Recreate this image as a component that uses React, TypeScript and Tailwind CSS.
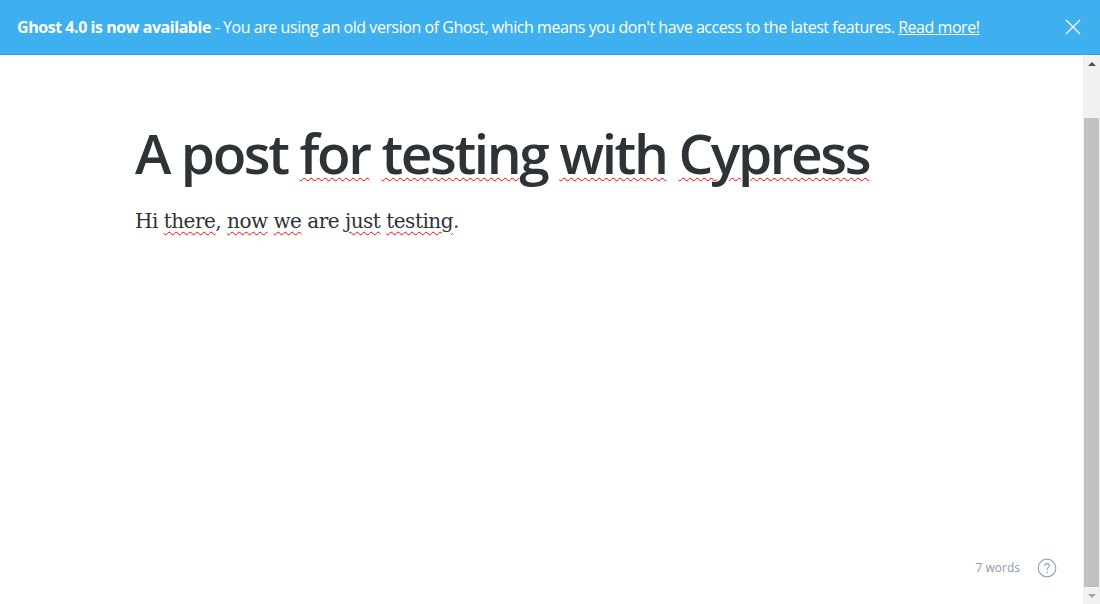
import React from "react";

const W = ({ children }: { children: React.ReactNode }) => (
  <span className="underline decoration-wavy decoration-[#ff0000] decoration-1 underline-offset-[3px]">{children}</span>
);

export default function App() {
  return (
    <div className="w-[1100px] h-[604px] overflow-hidden bg-white flex flex-col">
      <div
        className="h-[55px] shrink-0 bg-[#3eb0ef] border-b border-[#2a9fe0] flex items-center pl-[17px] pr-[19px] text-white text-[16px]"
        style={{ fontFamily: '"Open Sans", "Noto Sans", sans-serif' }}
      >
        <div className="flex-1 whitespace-nowrap tracking-[-0.45px]">
          <span className="font-bold">Ghost 4.0 is now available</span> - You are using an old version of Ghost, which means you don't have access to the latest features.{" "}
          <span className="underline">Read more!</span>
        </div>
        <svg width="16" height="16" viewBox="0 0 16 16" className="shrink-0">
          <path d="M1 1 L15 15 M15 1 L1 15" stroke="white" strokeWidth="1.3" fill="none" />
        </svg>
      </div>
      <div className="flex flex-1 min-h-0">
        <div className="flex-1 relative">
          <div className="pl-[135px] pt-[66px]">
            <h1
              className="text-[55px] leading-[64px] text-[#2e3338] font-semibold"
              style={{ fontFamily: '"Open Sans", "Noto Sans", sans-serif', letterSpacing: "-2.4px" }}
            >
              A post <W>for</W> <W>testing</W> <W>with</W> <W>Cypress</W>
            </h1>
            <p
              className="mt-[20px] text-[20px] leading-[32px] text-[#2e3338]"
              style={{ fontFamily: '"DejaVu Serif", Georgia, serif', letterSpacing: "-0.5px" }}
            >
              Hi <W>there</W>, <W>now</W> <W>we</W> are <W>just</W> <W>testing</W>.
            </p>
          </div>
          <div
            className="absolute right-[26px] bottom-[26px] flex items-center gap-[17px] text-[12px] text-[#8a9aab]"
            style={{ fontFamily: '"Open Sans", "Noto Sans", sans-serif' }}
          >
            <span>7 words</span>
            <svg width="20" height="20" viewBox="0 0 20 20">
              <circle cx="10" cy="10" r="8.8" fill="none" stroke="#98a6b5" strokeWidth="1.2" />
              <path d="M7.6 7.8 C7.6 6.4 8.7 5.6 10 5.6 C11.4 5.6 12.4 6.5 12.4 7.7 C12.4 9.3 10.2 9.5 10.2 11.3 V12" fill="none" stroke="#98a6b5" strokeWidth="1.2" />
              <circle cx="10.2" cy="14.2" r="0.8" fill="#98a6b5" />
            </svg>
          </div>
        </div>
        <div className="w-[17px] shrink-0 bg-[#f1f1f1] flex flex-col items-center">
          <div className="h-[17px] w-full flex items-center justify-center">
            <div className="w-0 h-0 border-l-[4px] border-r-[4px] border-b-[4px] border-l-transparent border-r-transparent border-b-[#505050]" />
          </div>
          <div className="h-[46px]" />
          <div className="w-[15px] flex-1 bg-[#c1c1c1]" />
          <div className="h-[17px] w-full flex items-center justify-center">
            <div className="w-0 h-0 border-l-[4px] border-r-[4px] border-t-[4px] border-l-transparent border-r-transparent border-t-[#a3a3a3]" />
          </div>
        </div>
      </div>
    </div>
  );
}
